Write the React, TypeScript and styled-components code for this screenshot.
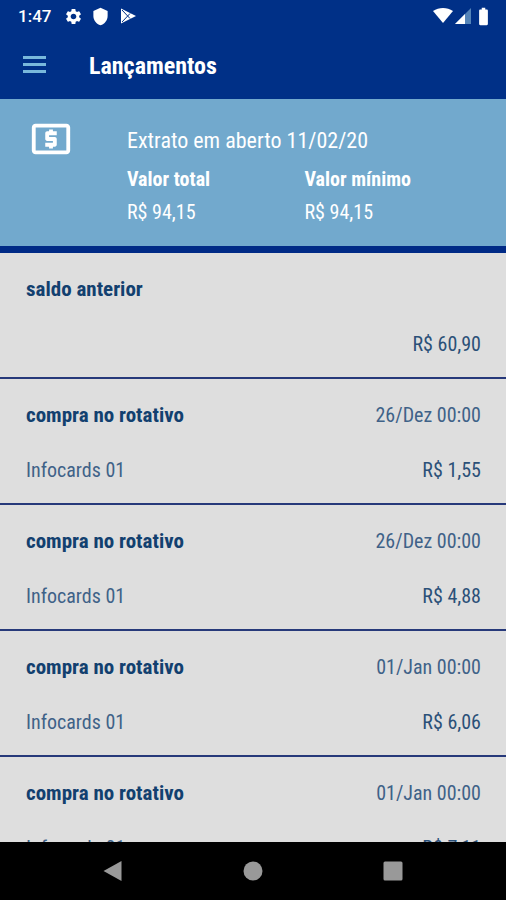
import React from "react";
import styled, { createGlobalStyle } from "styled-components";
import { MdBatteryFull, MdLocalAtm, MdSettings, MdShield } from "react-icons/md";

const GlobalStyle = createGlobalStyle`
  *, *::before, *::after { box-sizing: border-box; }
  body {
    margin: 0;
    background: #dedede;
    color: #12406f;
    font-family: "Roboto Condensed", "Liberation Sans Narrow", Roboto, sans-serif;
  }
  button { margin: 0; padding: 0; border: 0; background: none; cursor: pointer; font: inherit; }
  svg { display: block; }
`;

const Screen = styled.div`
  display: flex;
  flex-direction: column;
  height: 100vh;
  overflow: hidden;
`;

const StatusBar = styled.div`
  flex: none;
  display: flex;
  align-items: center;
  justify-content: space-between;
  height: 32px;
  padding: 0 12px 0 18px;
  background: #003087;
  color: #fff;
  font-family: Roboto, sans-serif;
  font-size: 17px;
  font-weight: 500;
  line-height: 32px;
`;

const StatusGroup = styled.div<{ $gap: number }>`
  display: flex;
  align-items: center;
  gap: ${({ $gap }) => $gap}px;
`;

const AppBar = styled.header`
  flex: none;
  display: flex;
  align-items: center;
  gap: 42px;
  height: 67px;
  padding: 0 22px;
  background: #003087;
`;

const MenuButton = styled.button`
  color: #78b8dc;
`;

const Title = styled.h1`
  margin: 0;
  color: #fff;
  font-size: 24px;
  font-weight: 700;
  line-height: 32px;
`;

const Summary = styled.section`
  flex: none;
  display: grid;
  grid-template-columns: 46px 1fr;
  column-gap: 53px;
  padding: 17px 24px 21px 28px;
  background: #72a9cd;
  border-bottom: 7px solid #002a86;
  color: #fff;
`;

const SummaryTitle = styled.h2`
  margin: 0 0 2px;
  padding-top: 9px;
  font-size: 22px;
  font-weight: 400;
  line-height: 32px;
`;

const Totals = styled.dl`
  display: grid;
  grid-template-columns: 1fr 1fr;
  margin: 0;
  font-size: 20px;
`;

const TotalLabel = styled.dt`
  font-weight: 700;
  line-height: 40px;
`;

const TotalValue = styled.dd`
  margin: 0;
  line-height: 26px;
`;

const Entries = styled.ul`
  flex: 1;
  min-height: 0;
  margin: 0;
  padding: 0;
  overflow-y: auto;
  scrollbar-width: none;
  list-style: none;
`;

const Entry = styled.li`
  display: flex;
  flex-direction: column;
  gap: 29px;
  padding: 23px 25px 20px 26px;
  border-bottom: 2px solid #27397a;
  font-size: 20px;
  line-height: 26px;
`;

const EntryLine = styled.div`
  display: flex;
  justify-content: space-between;
`;

const EntryName = styled.strong`
  font-size: 21px;
  font-weight: 700;
`;

const EntryDetail = styled.span`
  color: #3f6288;
`;

const EntryValue = styled.span`
  margin-left: auto;
  color: #2b5078;
`;

const NavBar = styled.nav`
  flex: none;
  display: grid;
  grid-template-columns: repeat(3, 140px);
  justify-content: center;
  height: 58px;
  background: #000;
  color: #999;
`;

const NavButton = styled.button`
  display: grid;
  place-items: center;
  color: inherit;
`;

const entries = [
  { name: "saldo anterior", date: "", card: "", value: "R$ 60,90" },
  { name: "compra no rotativo", date: "26/Dez 00:00", card: "Infocards 01", value: "R$ 1,55" },
  { name: "compra no rotativo", date: "26/Dez 00:00", card: "Infocards 01", value: "R$ 4,88" },
  { name: "compra no rotativo", date: "01/Jan 00:00", card: "Infocards 01", value: "R$ 6,06" },
  { name: "compra no rotativo", date: "01/Jan 00:00", card: "Infocards 01", value: "R$ 7,11" },
];

export default function App() {
  return (
    <Screen>
      <GlobalStyle />
      <StatusBar>
        <StatusGroup $gap={13}>
          <span>1:47</span>
          <StatusGroup $gap={8}>
            <MdSettings size={19} />
            <MdShield size={19} />
            <svg width="19" height="18" viewBox="0 0 19 18">
              <path d="M3 1.5 L18 9 L3 16.5Z" fill="#fff" />
              <path d="M4 3 L12 11.5 M4 15 L12 6.5" stroke="#003087" strokeWidth="1" />
            </svg>
          </StatusGroup>
        </StatusGroup>
        <StatusGroup $gap={2}>
          <svg width="20" height="16" viewBox="0 0 20 16">
            <path d="M0 3 C6 -1 14 -1 20 3 L10 15Z" fill="#fff" />
          </svg>
          <svg width="16" height="16" viewBox="0 0 16 16">
            <path d="M16 0 V16 H0Z" fill="#5484b8" />
            <path d="M10 6 V16 H0Z" fill="#fff" />
          </svg>
          <MdBatteryFull size={21} />
        </StatusGroup>
      </StatusBar>
      <AppBar>
        <MenuButton type="button" aria-label="Menu">
          <svg width="25" height="20" viewBox="0 0 25 20" fill="currentColor">
            <path d="M1 0h23v3H1zM1 7h23v3H1zM1 14h23v3H1z" />
          </svg>
        </MenuButton>
        <Title>Lançamentos</Title>
      </AppBar>
      <Summary>
        <MdLocalAtm size={46} />
        <div>
          <SummaryTitle>Extrato em aberto 11/02/20</SummaryTitle>
          <Totals>
            <TotalLabel>Valor total</TotalLabel>
            <TotalLabel>Valor mínimo</TotalLabel>
            <TotalValue>R$ 94,15</TotalValue>
            <TotalValue>R$ 94,15</TotalValue>
          </Totals>
        </div>
      </Summary>
      <Entries>
        {entries.map((entry, index) => (
          <Entry key={index}>
            <EntryLine>
              <EntryName>{entry.name}</EntryName>
              <EntryDetail>{entry.date}</EntryDetail>
            </EntryLine>
            <EntryLine>
              <EntryDetail>{entry.card}</EntryDetail>
              <EntryValue>{entry.value}</EntryValue>
            </EntryLine>
          </Entry>
        ))}
      </Entries>
      <NavBar>
        <NavButton type="button" aria-label="Voltar">
          <svg width="20" height="22" viewBox="0 0 20 22" fill="currentColor">
            <path d="M18.5 1 V21 L0.5 11Z" />
          </svg>
        </NavButton>
        <NavButton type="button" aria-label="Início">
          <svg width="20" height="20" viewBox="0 0 20 20" fill="currentColor">
            <circle cx="10" cy="10" r="9.5" />
          </svg>
        </NavButton>
        <NavButton type="button" aria-label="Aplicativos recentes">
          <svg width="20" height="20" viewBox="0 0 20 20" fill="currentColor">
            <rect x="0.5" y="0.5" width="19" height="19" rx="1.5" />
          </svg>
        </NavButton>
      </NavBar>
    </Screen>
  );
}
